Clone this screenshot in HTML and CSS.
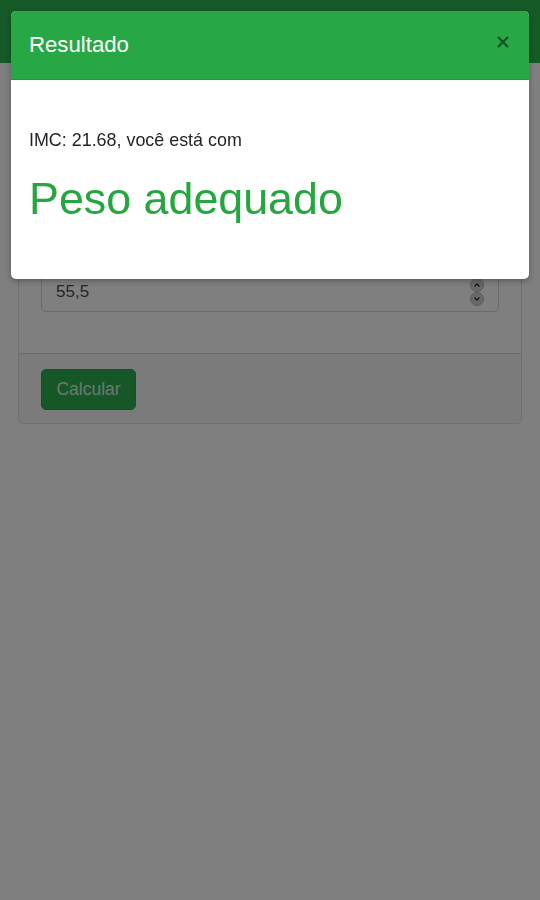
FILE: index.html
```html
<!DOCTYPE html>
<html lang="pt-BR">
<head>
<meta charset="utf-8">
<title>Calculadora IMC</title>
<link rel="stylesheet" href="styles.css">
</head>
<body>
<nav class="navbar"></nav>
<main class="container">
  <section class="card">
    <div class="card-header"></div>
    <div class="card-body">
      <div class="group">
        <div class="label"></div>
        <div class="field"></div>
      </div>
      <div class="group">
        <div class="label"></div>
        <div class="field"><span class="value">55,5</span>
          <svg class="spinner" width="16" height="30" viewBox="0 0 16 30"><circle cx="8" cy="8" r="6.5" fill="#d0d0d0" stroke="#b5b5b5"/><circle cx="8" cy="22" r="6.5" fill="#d0d0d0" stroke="#b5b5b5"/><path d="M5.5 9.5 8 7 10.5 9.5" fill="none" stroke="#333" stroke-width="1.4"/><path d="M5.5 20.5 8 23 10.5 20.5" fill="none" stroke="#333" stroke-width="1.4"/></svg>
        </div>
      </div>
    </div>
    <footer class="card-footer"><button class="btn">Calcular</button></footer>
  </section>
</main>
<div class="backdrop"></div>
<div class="modal">
  <div class="modal-header">
    <h5 class="modal-title">Resultado</h5>
    <svg class="close" width="14" height="14" viewBox="0 0 14 14"><path d="M2 2 12 12M12 2 2 12" stroke="#145322" stroke-width="2.2" stroke-linecap="butt"/></svg>
  </div>
  <div class="modal-body">
    <p class="imc">IMC: 21.68, você está com</p>
    <h1 class="result">Peso adequado</h1>
  </div>
</div>
</body>
</html>
```
FILE: styles.css
```css
* { box-sizing: border-box; }
html, body { margin: 0; padding: 0; }
body {
  background: #fff;
  font-family: "Liberation Sans", Arial, sans-serif;
  color: #212529;
  height: 900px;
}
.navbar {
  height: 63px;
  background: #2cb450;
}
.container { padding: 18px 18px 0; }
.card {
  border: 1px solid rgba(0,0,0,.125);
  border-radius: 5px;
  background: #fff;
}
.card-header {
  height: 50px;
  border-bottom: 1px solid rgba(0,0,0,.125);
  background: rgba(0,0,0,.03);
}
.card-body {
  padding: 22px 22px 23px;
  display: flex;
  flex-direction: column;
}
.group { display: flex; flex-direction: column; gap: 6px; margin-bottom: 18px; }
.label { height: 24px; }
.field {
  height: 40px;
  border: 1px solid #ced4da;
  border-radius: 5px;
  display: flex;
  align-items: center;
  justify-content: space-between;
  padding: 0 13px 0 14px;
  font-size: 17px;
  color: #495057;
}
.spinner { display: block; }
.card-footer {
  border-top: 1px solid rgba(0,0,0,.125);
  background: rgba(0,0,0,.03);
  padding: 15px 22px 13px;
}
.btn {
  width: 95px;
  height: 41px;
  border: 1px solid #26a044;
  border-radius: 5px;
  background: #2aae4c;
  color: #dcefe1;
  font-family: "Liberation Sans", Arial, sans-serif;
  font-size: 17.5px;
  padding: 0;
}
.backdrop {
  position: fixed;
  inset: 0;
  background: rgba(0,0,0,.5);
}
.modal {
  position: fixed;
  z-index: 2;
  top: 11px;
  left: 11px;
  width: 518px;
  background: #fff;
  border-radius: 5px;
  overflow: hidden;
  box-shadow: 0 2px 6px rgba(0,0,0,.3);
}
.modal-header {
  height: 69px;
  background: #28a745;
  border-bottom: 1px solid #229a3c;
  display: flex;
  align-items: center;
  justify-content: space-between;
  padding: 0 18px;
}
.modal-title {
  margin: 0;
  color: #fff;
  font-size: 22.2px;
  font-weight: 400;
  line-height: 1.5;
}
.close { display: block; margin-top: -6px; margin-right: 1px; }
.modal-body {
  height: 199px;
  padding: 47px 18px 0;
}
.imc {
  margin: 0;
  font-size: 17.9px;
  line-height: 26px;
}
.result {
  margin: 19px 0 0;
  font-size: 44.8px;
  font-weight: 400;
  line-height: 1.2;
  color: #25a63f;
}
```
